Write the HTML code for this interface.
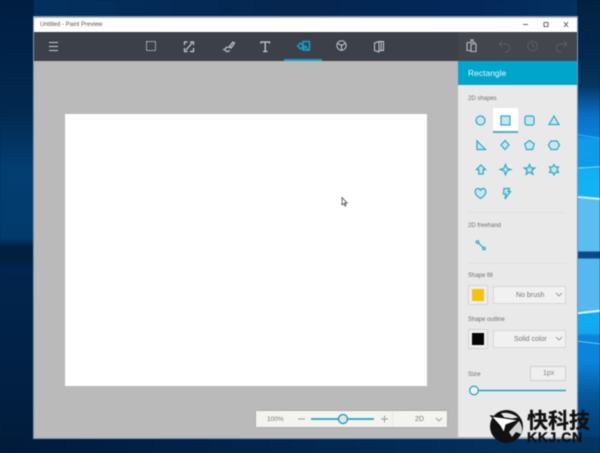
<!DOCTYPE html>
<html><head><meta charset="utf-8">
<style>
html,body{margin:0;padding:0;width:600px;height:453px;overflow:hidden;background:#04234a}
*{box-sizing:border-box}
body{position:relative;font-family:"Liberation Sans","Noto Sans CJK SC",sans-serif}
#w{position:absolute;left:0;top:0;width:600px;height:453px;overflow:hidden;filter:blur(.4px)}
.a{position:absolute}
.t{position:absolute;white-space:nowrap;color:#6f6f6f;font-size:6px;line-height:8px}
svg{position:absolute;left:0;top:0}
</style></head><body>
<div id="w">
<div class="a" style="left:0;top:0;width:600px;height:453px;background:linear-gradient(90deg,#011c3e 0,#03305f 30px,#04264f 300px,#03285a 460px,#03305f 570px,#05406f 600px)"></div>
<div class="a" style="left:0;top:0;width:34px;height:453px;background:linear-gradient(180deg,#011e42 0,#02284f 110px,#033e72 170px,#023a6b 238px,#011f3e 247px,#011f3e 257px,#02254d 270px,#011f42 400px,#011b3a 453px)"></div>
<div class="a" style="left:577px;top:0;width:23px;height:453px;background:linear-gradient(180deg,#02213f 0,#032a52 60px,#05365f 85px,#0a6fc4 115px,#0a80d8 135px,#0f9cea 140px,#0d9cec 166px,#12b0f2 170px,#14b4f4 196px,#5cbdf0 200px,#5cbdf0 251px,#0b4a86 252px,#0b4a86 258px,#55b8f0 259px,#58b8f0 310px,#12acf2 313px,#12a8f0 333px,#0a84dc 336px,#0a84dc 362px,#055a9c 395px,#044a86 415px,#033564 453px)"></div>
<div class="a" style="left:577px;top:167px;width:23px;height:1px;background:#8fdcfa;transform:rotate(-4deg)"></div>
<div class="a" style="left:577px;top:136px;width:23px;height:1px;background:#35b0f0;transform:rotate(10deg)"></div>
<div class="a" style="left:577px;top:197px;width:23px;height:2px;background:#d5eefc;transform:rotate(5deg)"></div>
<div class="a" style="left:577px;top:311px;width:23px;height:2px;background:#e2f4fd;transform:rotate(-6deg)"></div>
<div class="a" style="left:577px;top:342px;width:23px;height:1px;background:#6cc6f5;transform:rotate(7deg)"></div>
<div class="a" style="left:0;top:437px;width:600px;height:16px;background:linear-gradient(90deg,#011b3a,#02264f 300px,#033564 600px)"></div>

<!-- window -->
<div class="a" style="left:34px;top:17px;width:543px;height:421px;background:#bababa;outline:1px solid #7d97b0"></div>
<div class="a" style="left:34px;top:18px;width:543px;height:14px;background:#fff"></div>
<div class="t" style="left:40px;top:20px;font-size:6px;line-height:10px;color:#555">Untitled - Paint Preview</div>
<div class="a" style="left:34px;top:32px;width:424px;height:29px;background:#3c4049"></div>
<div class="a" style="left:458px;top:32px;width:119px;height:29px;background:#43464d"></div>
<div class="a" style="left:284px;top:59px;width:38px;height:2px;background:#1b9cc2"></div>
<div class="a" style="left:65px;top:114px;width:362px;height:272px;background:#fff"></div>

<!-- panel -->
<div class="a" style="left:458px;top:61px;width:119px;height:376px;background:#e9e9e9"></div>
<div class="a" style="left:458px;top:61px;width:119px;height:24px;background:#00a5cc"></div>
<div class="t" style="left:468px;top:68px;font-size:8.500px;line-height:11px;color:#e6f7fb">Rectangle</div>
<div class="t" style="left:468px;top:95px">2D shapes</div>
<div class="a" style="left:493px;top:108px;width:25px;height:25px;background:#fff;border-bottom:2px solid #5caabf"></div>
<div class="a" style="left:468px;top:212px;width:98px;height:1px;background:#e0e0e0"></div>
<div class="t" style="left:468px;top:222px">2D freehand</div>
<div class="a" style="left:468px;top:263px;width:98px;height:1px;background:#e0e0e0"></div>
<div class="t" style="left:468px;top:272px">Shape fill</div>
<div class="t" style="left:468px;top:316px">Shape outline</div>
<div class="t" style="left:468px;top:371px;font-size:6.500px">Size</div>

<div class="a" style="left:468px;top:285px;width:20px;height:20px;background:#eee;border:1px solid #d4d4d4"></div>
<div class="a" style="left:472px;top:289px;width:12px;height:12px;background:#f5c20f"></div>
<div class="a" style="left:493px;top:286px;width:73px;height:18px;background:#f1f1f1;border:1px solid #d6d6d6"></div>
<div class="t" style="left:516px;top:291px;font-size:7px;line-height:10px;color:#777">No brush</div>
<div class="a" style="left:468px;top:329px;width:20px;height:20px;background:#eee;border:1px solid #d4d4d4"></div>
<div class="a" style="left:472px;top:333px;width:12px;height:12px;background:#060606"></div>
<div class="a" style="left:493px;top:330px;width:73px;height:18px;background:#f1f1f1;border:1px solid #d6d6d6"></div>
<div class="t" style="left:514px;top:335px;font-size:7px;line-height:10px;color:#777">Solid color</div>
<div class="a" style="left:530px;top:366px;width:36px;height:15px;background:#efefef;border:1px solid #cfcfcf"></div>
<div class="t" style="left:543px;top:369px;font-size:7px;line-height:10px;color:#888">1px</div>

<!-- zoom bar -->
<div class="a" style="left:256px;top:411px;width:191px;height:16px;background:#f3f3f0;box-shadow:0 0 2px #999"></div>
<div class="a" style="left:392px;top:411px;width:1px;height:16px;background:#e6e6e3"></div>
<div class="t" style="left:267px;top:416px;font-size:6.500px;color:#777">100%</div>
<div class="t" style="left:415px;top:416px;font-size:7px;color:#777">2D</div>

<svg width="600" height="453" viewBox="0 0 600 453" fill="none">
<!-- window controls -->
<g stroke="#555" stroke-width=".9">
<path d="M523 24.500h5"/><rect x="544" y="22.500" width="4" height="4"/><path d="M564 22l4 5M568 22l-4 5"/>
</g>
<!-- toolbar icons -->
<g stroke="#c9cbce" stroke-width="1">
<path d="M49 42.500h9M49 46.500h9M49 50.500h9" stroke-width="1.100"/>
<rect x="146.500" y="41.500" width="9" height="9" stroke-dasharray="1.500 .8"/>
<path d="M184.500 45v-3h3M190 42h3.500v3M184.500 48v3.500h3M193.500 48v3.500H190M186 50l6-7" stroke-width="1.200"/>
<path d="M229 47l4-5 1.500 1-3.500 5zM228.500 47.500a2.200 2.200 0 1 0 1 2.500M223 49.500h1.500" stroke-width="1.200"/>
<path d="M261 43.500v-1.500h8.500v1.500M265.200 42v9.500M263 51.500h4.500" stroke-width="1.300"/>
<circle cx="341.500" cy="45.500" r="4.700"/><path d="M341.500 45.500v4.700M341.500 45.500l-4-2.200M341.500 45.500l4-2.200"/>
<path d="M374.500 43l4.500-1.500v10.500l-4.500-1.500zM379 41.500h4.500V50.500H379M381.200 42v8"/>
<path d="M467 42.500h4V39.800h2v2.700h2.500M467 42.500v8h3.500M471 44h5v7.500h-5z" stroke="#b9bbbe" stroke-width="1.100"/>
</g>
<g stroke="#5b5f66" stroke-width="1">
<path d="M499 44h7a4 4 0 0 1 0 8h-1M499 44l3-3M499 44l3 3"/>
<circle cx="532.500" cy="46" r="4.800"/><path d="M532.500 43v3l2 1"/>
<path d="M567 44h-7a4 4 0 0 0 0 8h1M567 44l-3-3M567 44l-3 3"/>
</g>
<!-- shapes tool icon -->
<g stroke="#22a3c6" stroke-width="1.300" fill="#16506a">
<rect x="303" y="41.500" width="6.500" height="8.500"/><path d="M297.500 46l3-3 3 3-3 3z"/><path d="M303 50l2.500-4 2.500 4z"/>
</g>
<!-- shapes grid -->
<g stroke="#2ba8c8" stroke-width="1.200" fill="#c9e7ef">
<circle cx="480.500" cy="120.500" r="4.500"/>
<rect x="501" y="116" width="9" height="9"/>
<rect x="525" y="116" width="9" height="9" rx="2"/>
<path d="M554 116l5 8.500h-10z"/>
<path d="M477 141v8.500h8.500z"/>
<path d="M505 140.500l4 4.500-4 4.500-4-4.500z"/>
<path d="M529.500 140.500l4.800 3.500-1.800 5.500h-6l-1.800-5.500z"/>
<path d="M551 141h6l2.500 4-2.500 4.500h-6l-2.500-4.500z"/>
<path d="M481 165l4.500 4.500h-2.300v4.500h-4.400v-4.500h-2.300z"/>
<path d="M505.500 164.500l1.500 3.800 3.800 1.200-3.800 1.300-1.500 4-1.500-4-3.800-1.300 3.800-1.200z"/>
<path d="M529.500 164.500l1.500 3.500h3.800l-3 2.500 1.100 3.800-3.400-2.200-3.400 2.200 1.100-3.800-3-2.500h3.800z"/>
<path d="M554 164.500l1.500 2.500h3l-1.500 2.700 1.500 2.700h-3l-1.500 2.500-1.500-2.500h-3l1.500-2.700-1.500-2.700h3z"/>
<path d="M480.500 198.500c-8-5-5.500-10-2.700-10 1.300 0 2.200.8 2.700 1.700.5-.9 1.400-1.700 2.700-1.700 2.800 0 5.300 5-2.700 10z"/>
<path d="M504 188.500h5.500l-1.500 3h2.500l-5.500 7.500 1-5h-2.500z"/>
</g>
<g stroke="#2ba8c8" stroke-width="1.200" fill="#c9e7ef">
<path d="M478 242.500l5.500 5.500" fill="none"/><circle cx="477.500" cy="242" r="1.300"/><circle cx="484" cy="248.500" r="1.300"/>
</g>
<!-- chevrons -->
<g stroke="#999" stroke-width=".9">
<path d="M556 293l3 3 3-3M556 337l3 3 3-3"/>
<path d="M436 418l3 3 3-3"/>
<path d="M298 419h7M381 419h7M384.500 415.500v7"/>
</g>
<!-- sliders -->
<path d="M474 390.500h92" stroke="#1fa4c6" stroke-width="1.500"/>
<circle cx="474" cy="390.500" r="4.300" fill="#eef3f5" stroke="#2ba5c6" stroke-width="1.300"/>
<path d="M311 419h63" stroke="#1fa4c6" stroke-width="1.700"/>
<circle cx="343" cy="419" r="4.500" fill="#dce7ec" stroke="#2b8fb0" stroke-width="1.300"/>
<!-- cursor -->
<path d="M342 197.500v7.500l1.800-1.600 1.200 2.600 1-.5-1.200-2.500h2.400z" fill="#fff" stroke="#333" stroke-width=".7"/>
<!-- watermark logo -->
<circle cx="506.500" cy="426.500" r="16.500" fill="#111"/>
<path d="M501 413.500c5-1.500 12 0 17 4l-12 2z" fill="#e9e9e9"/>
<path d="M491 416l28 4-13 5-2 8-4-7z" fill="#fff" stroke="#111" stroke-width="1.200"/>
<path d="M519 421c3 4 4 9 2 13l-5-2-4 5-3-5z" fill="#e8e8e8" opacity=".9"/>
</svg>
<div class="t" style="left:527px;top:408px;font-size:21px;line-height:24px;color:#111;font-weight:bold;font-family:'Noto Sans CJK SC',sans-serif;-webkit-text-stroke:.3px #111">快科技</div>
<div class="t" style="left:527px;top:430px;font-size:14px;line-height:14px;color:#111;font-weight:bold;letter-spacing:.6px;-webkit-text-stroke:.4px #111">KKJ.CN</div>
</div>
</body></html>
